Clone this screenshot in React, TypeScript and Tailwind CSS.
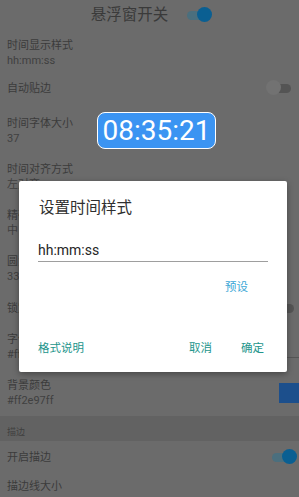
import React from 'react';

const FONT = { fontFamily: 'Roboto, "Noto Sans CJK SC", sans-serif' };

type Row = { title: string; summary?: string; right?: React.ReactNode; pt?: string; pb?: string };

function Switch({ on }: { on: boolean }) {
  return (
    <div className="relative w-[26px] h-[16px] shrink-0">
      <div
        className={
          on
            ? 'absolute left-[1px] right-[3px] top-[4px] h-[9px] rounded-full bg-[#4b6f7e]'
            : 'absolute left-[1px] right-[1px] top-[4px] h-[9px] rounded-full bg-[#545454]'
        }
      />
      <div
        className={
          on
            ? 'absolute right-0 top-0 w-[15px] h-[15px] rounded-full bg-[#0a5f92]'
            : 'absolute left-0 top-0 w-[15px] h-[15px] rounded-full bg-[#727272]'
        }
      />
    </div>
  );
}

function PrefRow({ title, summary, right, pt = 'pt-[8px]', pb = 'pb-[8px]' }: Row) {
  return (
    <div className={`flex items-center pl-[7px] pr-[6px] ${pt} ${pb}`}>
      <div className="flex-1 min-w-0">
        <p className="text-[11px] leading-[15px] text-[#3b3b3b]">{title}</p>
        {summary && <p className="text-[11px] leading-[15px] text-[#404040]">{summary}</p>}
      </div>
      {right}
    </div>
  );
}

export default function App() {
  return (
    <div style={FONT} className="relative w-[299px] h-[497px] overflow-hidden bg-[#6b6b6b]">
      {/* preference list, dimmed by the dialog scrim */}
      <div className="flex items-center justify-center h-[30px] pl-[4px]">
        <span className="text-[15.5px] leading-[20px] text-[#3a3a3a]">悬浮窗开关</span>
        <div className="ml-[18px]">
          <Switch on />
        </div>
      </div>
      <PrefRow title="时间显示样式" summary="hh:mm:ss" pb="pb-[4px]" />
      <PrefRow title="自动贴边" pb="pb-[12px]" right={<div className="mr-[1px]"><Switch on={false} /></div>} />
      <PrefRow title="时间字体大小" summary="37" />
      <PrefRow title="时间对齐方式" summary="左对齐" />
      <PrefRow title="精确到秒" summary="中" />
      <PrefRow title="圆角大小" summary="33" />
      <PrefRow title="锁定位置" right={<div className="-mr-[2px]"><Switch on={false} /></div>} />
      <PrefRow
        title="字体颜色"
        summary="#ffffffff"
        right={<div className="w-[20px] h-[21px] -mr-[6px] border-b border-[#555555]" />}
      />
      <PrefRow
        title="背景颜色"
        summary="#ff2e97ff"
        right={<div className="w-[20px] h-[20px] -mr-[6px] bg-[#1c4f8c]" />}
      />
      <div className="h-[25px] bg-[#626262] pl-[7px] pt-[10px]">
        <p className="text-[9px] leading-[12px] text-[#3f3f3f]">描边</p>
      </div>
      <PrefRow title="开启描边" pb="pb-[6px]" right={<div className="-mr-[4px]"><Switch on /></div>} />
      <PrefRow title="描边线大小" summary="5" />

      {/* floating clock window */}
      <div className="absolute left-[97px] top-[112px] w-[119px] h-[37px] rounded-[8px] border-[1.5px] border-white bg-[#3b94f2] flex items-center justify-center">
        <span className="text-[28px] leading-[32px] text-white" style={{ fontFamily: 'Roboto, sans-serif' }}>
          08:35:21
        </span>
      </div>

      {/* dialog */}
      <div className="absolute left-[19px] top-[181px] w-[268px] h-[191px] rounded-[2px] bg-white shadow-[0_2px_6px_rgba(0,0,0,0.35)] flex flex-col">
        <p className="pt-[17px] pl-[20px] text-[15.5px] leading-[20px] text-[#2f2f2f]">设置时间样式</p>
        <div className="mt-[22px] mx-[19px] border-b-[1.5px] border-[#9e9e9e] pb-[1px]">
          <p className="text-[14px] leading-[20px] text-[#262626]">hh:mm:ss</p>
        </div>
        <div className="flex justify-end pr-[39px] mt-[17px]">
          <span className="text-[11.5px] leading-[16px] text-[#3aa7d6]">预设</span>
        </div>
        <div className="mt-auto mb-[16px] flex items-center pl-[19px] pr-[23px]">
          <span className="text-[11.5px] leading-[16px] text-[#23958c]">格式说明</span>
          <span className="ml-auto text-[11.5px] leading-[16px] text-[#23958c]">取消</span>
          <span className="ml-[29px] text-[11.5px] leading-[16px] text-[#23958c]">确定</span>
        </div>
      </div>
    </div>
  );
}
